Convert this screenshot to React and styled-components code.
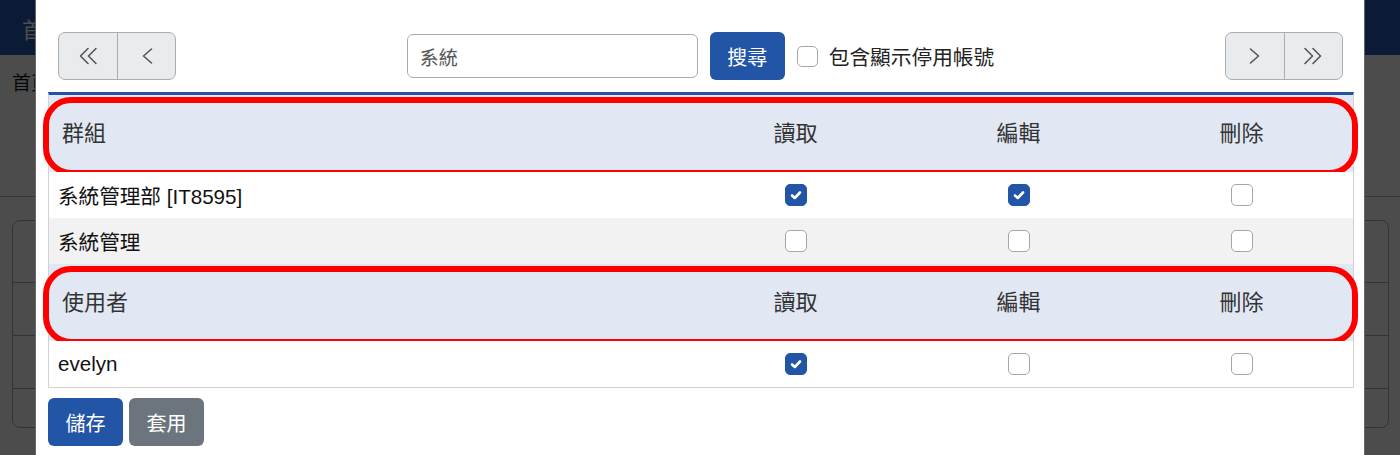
import React from 'react'
import styled, { createGlobalStyle } from 'styled-components'

const GlobalStyle = createGlobalStyle`
  html, body {
    margin: 0;
    padding: 0;
    height: 455px;
    overflow: hidden;
  }
  body {
    font-family: "Liberation Sans", "Noto Sans CJK TC", Arial, sans-serif;
    background: #fff;
  }
  * { box-sizing: border-box; }
`

const BLUE = '#2355a7'

// page behind the dialog
const Page = styled.div`
  width: 1400px;
  height: 455px;
  overflow: hidden;
`

const Navbar = styled.header`
  height: 55px;
  background: #255ab4;
  display: flex;
  align-items: center;
  padding: 0 22px;
  font-size: 22px;
  color: #fff;
`

const Content = styled.main`
  padding: 17px 12px 0;
`

const Crumb = styled.div`
  font-size: 19px;
  line-height: 24px;
  color: #111;
`

const Rule = styled.div`
  height: 1px;
  background: #bbb;
  margin: 100px -12px 0;
`

const Card = styled.div`
  margin-top: 23px;
  border: 1px solid #aaa;
  border-radius: 8px;
  width: 1377px;
`

const CardRow = styled.div`
  height: ${p => p.h}px;
  border-bottom: ${p => (p.last ? 'none' : '1px solid #aaa')};
`

// dialog
const Backdrop = styled.div`
  position: fixed;
  inset: 0;
  background: rgba(0, 0, 0, 0.7);
  display: flex;
  justify-content: center;
`

const Dialog = styled.div`
  width: 1330px;
  height: 100%;
  background: #fff;
  border-left: 1px solid rgba(0, 0, 0, 0.6);
  border-right: 1px solid rgba(0, 0, 0, 0.6);
  padding: 32px 10px 0 12px;
`

const Toolbar = styled.div`
  display: flex;
  justify-content: space-between;
  align-items: center;
  height: 48px;
  padding: 0 11px 0 10px;
`

const PagerGroup = styled.div`
  display: flex;
  height: 48px;
  border: 1px solid #adadad;
  border-radius: 7px;
  overflow: hidden;
  background: #e9ecef;
`

const PagerButton = styled.button`
  width: 58px;
  height: 100%;
  border: none;
  background: transparent;
  display: flex;
  align-items: center;
  justify-content: center;
  padding: 0;
  color: #555;
  & + & {
    border-left: 1px solid #adadad;
  }
`

const SearchArea = styled.div`
  display: flex;
  align-items: center;
  gap: 12px;
`

const SearchInput = styled.div`
  width: 291px;
  height: 44px;
  border: 1px solid #ababab;
  border-radius: 6px;
  padding: 0 12px;
  display: flex;
  align-items: center;
  font-size: 19px;
  color: #555;
`

const SolidButton = styled.button`
  width: 75px;
  height: 48px;
  border: none;
  border-radius: 6px;
  background: ${p => (p.muted ? '#6c757d' : BLUE)};
  color: #fff;
  font-family: inherit;
  font-size: 20px;
  padding: 0;
`

const CheckLabel = styled.label`
  display: flex;
  align-items: center;
  gap: 11px;
  font-size: 20.7px;
  color: #222;
`

const Box = styled.span`
  display: inline-flex;
  align-items: center;
  justify-content: center;
  width: ${p => p.size || 22}px;
  height: ${p => p.size || 22}px;
  border-radius: 5px;
  border: 1px solid ${p => (p.checked ? BLUE : '#a6a6a6')};
  background: ${p => (p.checked ? BLUE : '#fff')};
`

const Table = styled.div`
  margin-top: 12px;
  border-top: 3px solid #2353a5;
  border-left: 1px solid #d2d2d2;
  border-right: 1px solid #d2d2d2;
  border-bottom: 1px solid #d2d2d2;
`

const Row = styled.div`
  display: grid;
  grid-template-columns: 635px repeat(3, 1fr);
  align-items: center;
  height: ${p => (p.head ? 77 : 46)}px;
  padding-bottom: ${p => (p.head ? 5 : 0)}px;
  background: ${p => (p.head ? '#e1e8f4' : p.striped ? '#f2f2f2' : '#fff')};
  font-size: ${p => (p.head ? 22 : 20.6)}px;
  color: ${p => (p.head ? '#333' : '#111')};
  position: relative;
`

const HighlightRing = styled.span`
  position: absolute;
  left: -6px;
  right: -5px;
  top: 2px;
  bottom: -4px;
  border: 6px solid #ff0000;
  border-radius: 28px;
  pointer-events: none;
`

const NameCell = styled.div`
  padding-left: ${p => (p.head ? 13 : 9)}px;
`

const Cell = styled.div`
  display: flex;
  justify-content: center;
`

const Footer = styled.div`
  display: flex;
  gap: 6px;
  margin-top: 10px;
`

const Chevron = ({ dir = 'left', double }) => {
  const flip = dir === 'right' ? 'scale(-1,1) translate(-20,0)' : undefined
  return (
    <svg width="20" height="18" viewBox="0 0 20 18" fill="none" stroke="#555" strokeWidth="1.6" strokeLinecap="round" strokeLinejoin="round">
      <g transform={flip}>
        {double ? (
          <>
            <polyline points="10,1.5 2.5,9 10,16.5" />
            <polyline points="18,1.5 10.5,9 18,16.5" />
          </>
        ) : (
          <polyline points="14.5,2 6.5,9 14.5,16" />
        )}
      </g>
    </svg>
  )
}

const Check = ({ checked, size }) => (
  <Box checked={checked} size={size}>
    {checked && (
      <svg width="14" height="14" viewBox="0 0 14 14" fill="none" stroke="#fff" strokeWidth="2.6" strokeLinecap="round" strokeLinejoin="round">
        <polyline points="3,7.5 5.8,10 11,4.5" />
      </svg>
    )}
  </Box>
)

const HeadRow = ({ title }) => (
  <Row head>
    <NameCell head>{title}</NameCell>
    <Cell>讀取</Cell>
    <Cell>編輯</Cell>
    <Cell>刪除</Cell>
    <HighlightRing />
  </Row>
)

const groups = [
  { name: '系統管理部 [IT8595]', perms: [true, true, false] },
  { name: '系統管理', perms: [false, false, false] },
]

const users = [{ name: 'evelyn', perms: [true, false, false] }]

const DataRow = ({ item, striped }) => (
  <Row striped={striped}>
    <NameCell>{item.name}</NameCell>
    {item.perms.map((p, i) => (
      <Cell key={i}>
        <Check checked={p} />
      </Cell>
    ))}
  </Row>
)

export default function App() {
  return (
    <>
      <GlobalStyle />
      <Page>
        <Navbar>首頁</Navbar>
        <Content>
          <Crumb>首頁</Crumb>
          <Rule />
          <Card>
            <CardRow h={62} />
            <CardRow h={53} />
            <CardRow h={53} />
            <CardRow h={38} last />
          </Card>
        </Content>
      </Page>
      <Backdrop>
        <Dialog>
          <Toolbar>
            <PagerGroup>
              <PagerButton><Chevron double /></PagerButton>
              <PagerButton><Chevron /></PagerButton>
            </PagerGroup>
            <SearchArea>
              <SearchInput>系統</SearchInput>
              <SolidButton>搜尋</SolidButton>
              <CheckLabel>
                <Check size={21} />
                包含顯示停用帳號
              </CheckLabel>
            </SearchArea>
            <PagerGroup>
              <PagerButton><Chevron dir="right" /></PagerButton>
              <PagerButton><Chevron dir="right" double /></PagerButton>
            </PagerGroup>
          </Toolbar>
          <Table>
            <HeadRow title="群組" />
            {groups.map((g, i) => (
              <DataRow key={g.name} item={g} striped={i % 2 === 1} />
            ))}
            <HeadRow title="使用者" />
            {users.map(u => (
              <DataRow key={u.name} item={u} />
            ))}
          </Table>
          <Footer>
            <SolidButton>儲存</SolidButton>
            <SolidButton muted>套用</SolidButton>
          </Footer>
        </Dialog>
      </Backdrop>
    </>
  )
}
